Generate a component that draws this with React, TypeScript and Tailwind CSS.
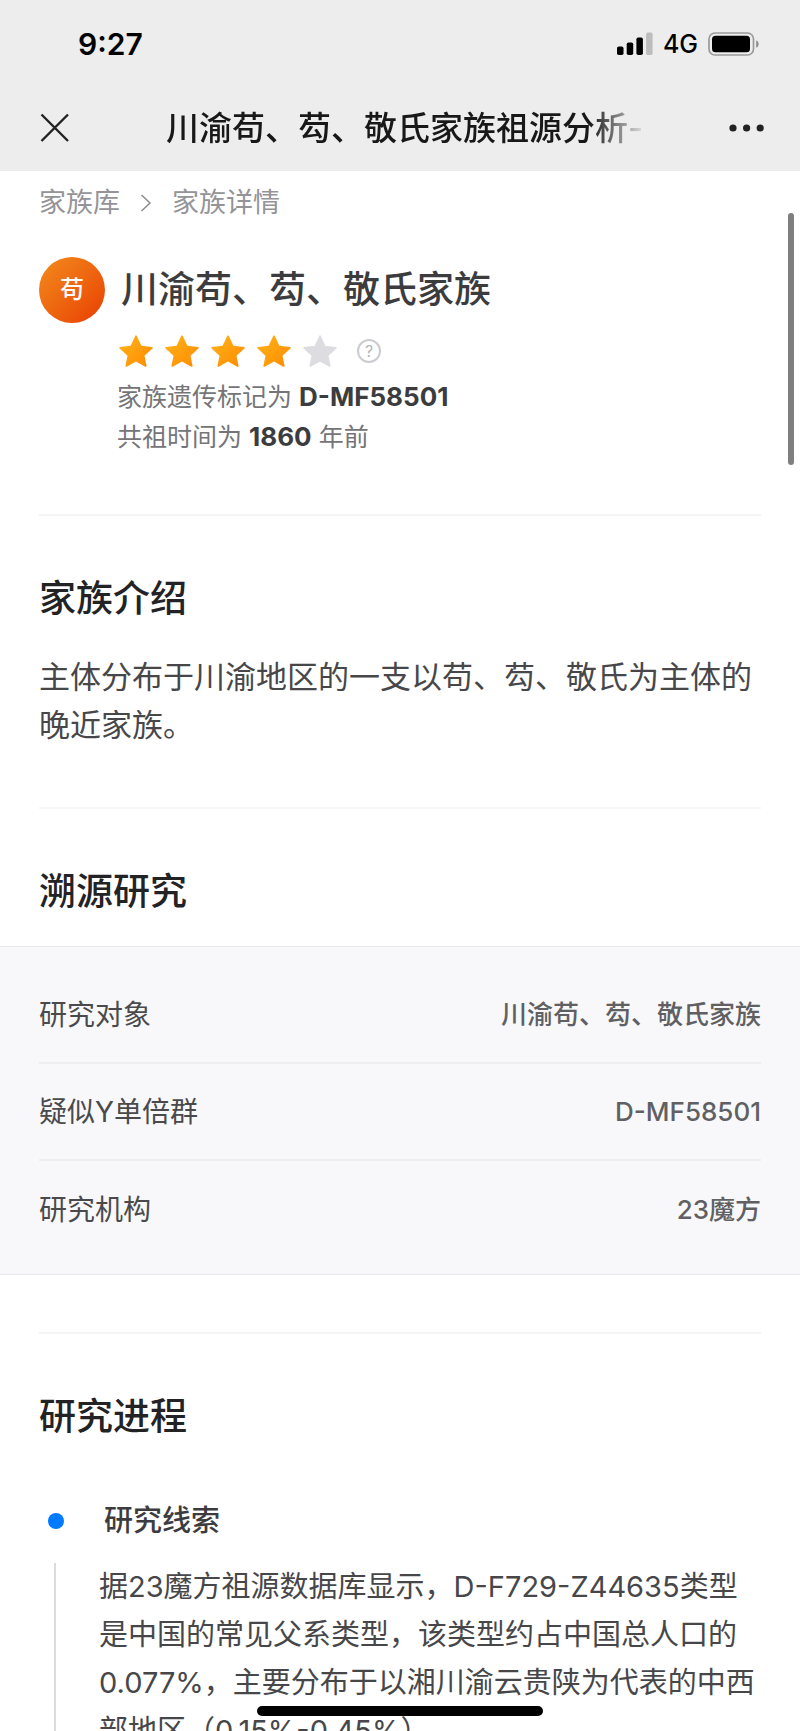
import * as React from "react";

const studyRows = [
    {id: 1, label: '研究对象', value: '川渝苟、芶、敬氏家族'},
    {id: 2, label: '疑似Y单倍群', value: 'D-MF58501'},
    {id: 3, label: '研究机构', value: '23魔方'},
]

function StatusBar() {
    return (
        <div className="flex h-[88px] items-center justify-between pl-[78px] pr-10 text-black">
            <time className="text-[30px] leading-9 font-semibold">9:27</time>
            <div className="flex items-center gap-2.5">
                <svg width="36" height="24" viewBox="0 0 36 24" aria-hidden="true">
                    <rect x="0" y="14.5" width="6.5" height="8.5" rx="1.8"/>
                    <rect x="9.7" y="10.5" width="6.5" height="12.5" rx="1.8"/>
                    <rect x="19.4" y="5.5" width="6.5" height="17.5" rx="1.8"/>
                    <rect x="29.1" y="0.5" width="6.5" height="22.5" rx="1.8" fill="#bdbdbd"/>
                </svg>
                <span className="text-[25px] leading-8 font-medium">4G</span>
                <svg width="52" height="24" viewBox="0 0 52 24" aria-hidden="true">
                    <rect x="1" y="1" width="44.5" height="22" rx="6" fill="none" stroke="#9a9a9a" strokeWidth="1.7"/>
                    <rect x="4" y="3.7" width="38" height="16.6" rx="3.5"/>
                    <path d="M48.2 8.2c3.2 1.3 3.2 6.3 0 7.6z" fill="#8c8c8c"/>
                </svg>
            </div>
        </div>
    )
}

function NavBar({title}: { title: string }) {
    return (
        <div className="flex h-[83px] items-center pb-1 pl-10 pr-[35px]">
            <button type="button" aria-label="关闭">
                <svg width="30" height="30" viewBox="0 0 30 30" fill="none" stroke="#222" strokeWidth="2.4">
                    <path d="M1.5 1.5l26.5 26.5M28 1.5L1.5 28"/>
                </svg>
            </button>
            <h1 className="ml-24 mr-[82px] flex-1 whitespace-nowrap text-[33px] leading-12 font-medium text-[#181818] [mask-image:linear-gradient(to_right,#000_88%,transparent)]">
                {title}
            </h1>
            <button type="button" aria-label="更多">
                <svg width="36" height="10" viewBox="0 0 36 10" fill="#222">
                    <circle cx="4" cy="5" r="3.6"/>
                    <circle cx="17.6" cy="5" r="3.6"/>
                    <circle cx="31.2" cy="5" r="3.6"/>
                </svg>
            </button>
        </div>
    )
}

function Star({active}: { active: boolean }) {
    return (
        <svg width="34" height="32" viewBox="0 0 34 32" aria-hidden="true">
            <defs>
                <linearGradient id="star" x1="0" y1="0" x2="1" y2="1">
                    <stop offset="0" stopColor="#ffb41c"/>
                    <stop offset="1" stopColor="#ff8a00"/>
                </linearGradient>
            </defs>
            <path
                d="M16.2 1q.8-1.3 1.6 0l4.600 9.700 10.600 1.300q1.300.4.4 1.500l-7.900 7.300 2.100 10.100q0 1.300-1.300.8L17 26.600 7.700 31.700q-1.300.5-1.300-.8l2.100-10.100L.6 13.500q-.9-1.100.4-1.500l10.600-1.300z"
                fill={active ? 'url(#star)' : '#dcdce1'}/>
        </svg>
    )
}

function Divider() {
    return <hr className="h-0.5 border-0 bg-[#f5f5f6]"/>
}

function SectionTitle({children}: { children: React.ReactNode }) {
    return <h2 className="text-[37px] leading-12 font-medium text-[#232325]">{children}</h2>
}

export default function App() {
    return (
        <div
            className="relative flex h-screen flex-col overflow-hidden bg-white font-['Inter','Noto_Sans_CJK_SC',sans-serif]">
            <header className="shrink-0 bg-[#ededed]">
                <StatusBar/>
                <NavBar title="川渝苟、芶、敬氏家族祖源分析-"/>
            </header>

            <main className="min-h-0 flex-1 overflow-hidden">
                <div className="px-[39px]">
                    <nav className="flex h-16 items-center text-[27px] leading-9 text-[#939398]">
                        <a href="#">家族库</a>
                        <svg className="mx-5" width="12" height="18" viewBox="0 0 12 18" fill="none" stroke="#8a8a8f"
                             strokeWidth="1.5">
                            <path d="M1.500 1l8.500 8-8.500 8"/>
                        </svg>
                        <a href="#">家族详情</a>
                    </nav>

                    <section className="pt-[22px] pb-[57px]">
                        <div className="flex items-center gap-4">
                            <div
                                className="flex size-[66px] shrink-0 items-center justify-center rounded-full bg-linear-to-br from-[#f28a1c] to-[#e83a02] text-[24px] leading-8 font-medium text-white">
                                苟
                            </div>
                            <h2 className="text-[37px] leading-12 font-medium text-[#3c3c3f]">川渝苟、芶、敬氏家族</h2>
                        </div>
                        <div className="pl-[78px]">
                            <div className="mt-3 flex items-center gap-3 pl-0.5">
                                {[1, 2, 3, 4, 5].map((n) => <Star key={n} active={n < 5}/>)}
                                <button type="button" aria-label="星级说明"
                                        className="ml-2 flex size-6 items-center justify-center rounded-full border-2 border-[#cbcbd1] text-base leading-5 text-[#b4b4ba]">
                                    ?
                                </button>
                            </div>
                            <div className="mt-2.5 text-[25px] leading-[39px] text-[#757578]">
                                <p>家族遗传标记为 <strong className="text-[26px] font-bold text-[#3c3c3f]">D-MF58501</strong></p>
                                <p>共祖时间为 <strong className="text-[26px] font-bold text-[#3c3c3f]">1860</strong> 年前</p>
                            </div>
                        </div>
                    </section>

                    <Divider/>

                    <section className="pt-[59px] pb-[58px]">
                        <SectionTitle>家族介绍</SectionTitle>
                        <p className="mt-[30px] text-[31px] leading-12 text-[#47474a]">
                            主体分布于川渝地区的一支以苟、芶、敬氏为主体的晚近家族。
                        </p>
                    </section>

                    <Divider/>

                    <section className="pt-[59px] pb-[30px]">
                        <SectionTitle>溯源研究</SectionTitle>
                    </section>
                </div>

                <dl className="border-y border-[#e9e9ec] bg-[#f8f8fa] px-[39px] pt-5 pb-4">
                    {studyRows.map((row) => (
                        <div key={row.id}
                             className="flex h-[97px] items-center justify-between border-b-2 border-[#eeeef0] last:border-b-0">
                            <dt className="text-[28px] leading-10 text-[#4a4a4c]">{row.label}</dt>
                            <dd className="text-[26px] leading-10 font-medium text-[#606063]">{row.value}</dd>
                        </div>
                    ))}
                </dl>

                <div className="px-[39px] pt-[57px]">
                    <Divider/>
                    <section className="pt-[59px]">
                        <SectionTitle>研究进程</SectionTitle>
                        <div className="mt-14 flex items-center gap-10 pl-[9px]">
                            <span className="size-4 rounded-full bg-[#007aff]"/>
                            <h3 className="text-[29px] leading-12 font-medium text-[#3c3c3f]">研究线索</h3>
                        </div>
                        <div className="ml-[15px] mt-[18px] border-l-2 border-[#dcdcdf] pl-[43px]">
                            <p className="text-[29px] leading-12 text-[#47474a]">
                                据23魔方祖源数据库显示，D-F729-Z44635类型是中国的常见父系类型，该类型约占中国总人口的0.077%，主要分布于以湘川渝云贵陕为代表的中西部地区（0.15%-0.45%）
                            </p>
                        </div>
                    </section>
                </div>
            </main>

            {/* overlays: scroll thumb and home indicator */}
            <div className="absolute right-1.5 top-[213px] h-[252px] w-1.5 rounded-full bg-[#7f7f7f]"/>
            <div className="absolute inset-x-0 bottom-[15px] flex justify-center">
                <div className="h-2.5 w-[286px] rounded-full bg-black"/>
            </div>
        </div>
    )
}
